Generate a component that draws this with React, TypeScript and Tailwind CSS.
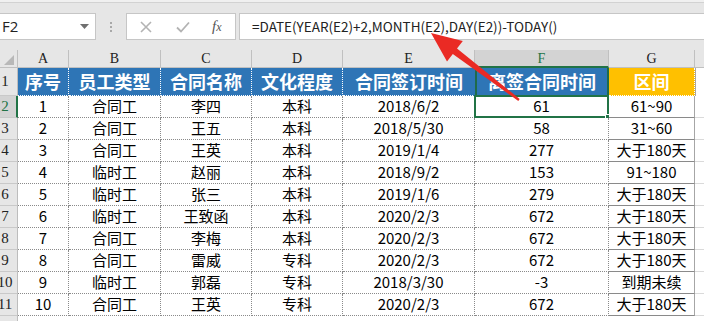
import React from 'react';

type Row = [string, string, string, string, string, string, string];

const rows: Row[] = [
  ['1', '合同工', '李四', '本科', '2018/6/2', '61', '61~90'],
  ['2', '合同工', '王五', '本科', '2018/5/30', '58', '31~60'],
  ['3', '合同工', '王英', '本科', '2019/1/4', '277', '大于180天'],
  ['4', '临时工', '赵丽', '本科', '2018/9/2', '153', '91~180'],
  ['5', '临时工', '张三', '本科', '2019/1/6', '279', '大于180天'],
  ['6', '临时工', '王致函', '本科', '2020/2/3', '672', '大于180天'],
  ['7', '合同工', '李梅', '本科', '2020/2/3', '672', '大于180天'],
  ['8', '合同工', '雷威', '专科', '2020/2/3', '672', '大于180天'],
  ['9', '临时工', '郭磊', '专科', '2018/3/30', '-3', '到期未续'],
  ['10', '合同工', '王英', '专科', '2020/2/3', '672', '大于180天'],
];

const heads = ['序号', '员工类型', '合同名称', '文化程度', '合同签订时间', '离签合同时间', '区间'];
const letters = ['A', 'B', 'C', 'D', 'E', 'F', 'G'];
const widths = ['w-[51px]', 'w-[92px]', 'w-[91px]', 'w-[91px]', 'w-[132px]', 'w-[134px]', 'w-[86px]'];

const cjk = { fontFamily: '"Noto Sans CJK SC", "Noto Sans", sans-serif' };
const serif = { fontFamily: '"Liberation Serif", "DejaVu Serif", serif' };

const RowHead: React.FC<{ n: number; active?: boolean; h: string }> = ({ n, active, h }) => (
  <div
    className={`w-[18px] ${h} shrink-0 overflow-hidden flex items-center border-b border-[#c9c9c9] ${
      active ? 'bg-[#d3d3d3] text-[#217346] border-r-2 border-r-[#217346]' : 'bg-[#e6e6e6] text-[#222] border-r border-r-[#bdbdbd]'
    }`}
  >
    <div className="w-[24px] -ml-[7px] shrink-0 text-center text-[15px] leading-none" style={serif}>
      {n}
    </div>
  </div>
);

export default function App() {
  return (
    <div className="relative w-[704px] h-[321px] overflow-hidden bg-[#e6e6e6] select-none">
      {/* top strip */}
      <div className="h-[3px] bg-[#f0f0f0] border-b border-[#d2d2d2]" />

      {/* formula row */}
      <div className="mt-[10px] h-[27px] flex items-stretch">
        <div className="w-[96px] bg-white border border-l-0 border-[#c6c6c6] flex items-center justify-between pl-[2px] pr-[6px]">
          <span className="text-[15px] text-[#222]" style={{ fontFamily: '"Open Sans", "Noto Sans", sans-serif' }}>
            F2
          </span>
          <svg width="9" height="6" viewBox="0 0 9 6">
            <path d="M0 0h9L4.5 5z" fill="#6f6f6f" />
          </svg>
        </div>
        <div className="w-[30px] flex items-center justify-center">
          <div className="flex flex-col gap-[2px]">
            <span className="w-[2px] h-[2px] bg-[#a8a8a8]" />
            <span className="w-[2px] h-[2px] bg-[#a8a8a8]" />
            <span className="w-[2px] h-[2px] bg-[#a8a8a8]" />
          </div>
        </div>
        <div className="w-[110px] bg-white border border-[#c6c6c6] flex items-center">
          <svg className="ml-[13px]" width="12" height="12" viewBox="0 0 12 12">
            <path d="M1 1l10 10M11 1L1 11" stroke="#b3b3b3" strokeWidth="1.6" />
          </svg>
          <svg className="ml-[24px]" width="14" height="12" viewBox="0 0 14 12">
            <path d="M1 6.5l4 4L13 1.5" stroke="#b3b3b3" strokeWidth="1.8" fill="none" />
          </svg>
          <span className="ml-[22px] text-[15px] italic text-[#555] leading-none" style={serif}>
            f<span className="text-[12px]">x</span>
          </span>
        </div>
        <div className="ml-[3px] flex-1 bg-white border border-r-0 border-[#c6c6c6] flex items-center pl-[12px]">
          <span className="text-[13.5px] text-[#222] whitespace-nowrap" style={cjk}>
            =DATE(YEAR(E2)+2,MONTH(E2),DAY(E2))-TODAY()
          </span>
        </div>
      </div>

      {/* column letters */}
      <div className="mt-[10px] h-[18px] flex">
        <div className="w-[18px] shrink-0 border-r border-b border-[#c0c0c0] flex items-end justify-end pr-[3px] pb-[2px]">
          <svg width="10" height="10" viewBox="0 0 10 10">
            <path d="M10 0V10H0z" fill="#b8b8b8" />
          </svg>
        </div>
        {letters.map((l, i) => (
          <div
            key={l}
            className={`${widths[i]} shrink-0 flex items-center justify-center text-[14px] border-r border-[#c0c0c0] ${
              l === 'F' ? 'bg-[#d3d3d3] text-[#217346] border-b-2 border-b-[#217346]' : 'text-[#222] border-b border-b-[#c0c0c0]'
            }`}
            style={serif}
          >
            {l}
          </div>
        ))}
        <div className="flex-1 border-b border-[#c0c0c0]" />
      </div>

      {/* header row */}
      <div className="h-[28px] flex">
        <RowHead n={1} h="h-[28px]" />
        {heads.map((t, i) => (
          <div
            key={t}
            className={`${widths[i]} shrink-0 flex items-center justify-center text-white font-bold text-[18px] border-b border-dotted border-b-white ${
              i === 6 ? 'bg-[#ffc000]' : 'bg-[#2e75b6]'
            } ${i === 5 ? 'border-x-2 border-x-[#1f6b4a] border-solid' : 'border-r border-r-white border-dotted'} ${i === 4 ? 'border-r-0' : ''}`}
            style={cjk}
          >
            {t}
          </div>
        ))}
        <div className="flex-1 bg-white border-l border-[#a6a6a6]" />
      </div>

      {/* data */}
      {rows.map((r, ri) => (
        <div key={ri} className="h-[22px] flex">
          <RowHead n={ri + 2} active={ri === 0} h="h-[22px]" />
          {r.map((c, ci) => (
            <div
              key={ci}
              className={`relative ${widths[ci]} shrink-0 bg-white flex items-center justify-center text-[15px] text-black border-b border-dotted border-[#8a8a8a] ${
                ci === 6 ? 'border-r border-r-[#a6a6a6] border-solid' : 'border-r'
              }`}
              style={cjk}
            >
              {c}
              {ri === 0 && ci === 5 && (
                <div className="absolute -left-[1px] -top-[1px] -right-[1px] -bottom-[1px] border-2 border-[#217346]">
                  <div className="absolute -right-[4px] -bottom-[4px] w-[6px] h-[6px] bg-[#217346] border border-white" />
                </div>
              )}
            </div>
          ))}
          <div className="flex-1 bg-white border-b border-[#dadada]" />
        </div>
      ))}
      <div className="flex h-[22px]">
        <RowHead n={12} h="h-[22px]" />
        <div className="flex-1 bg-white" />
      </div>

      {/* red arrow */}
      <svg className="absolute left-0 top-0 pointer-events-none" width="704" height="321" viewBox="0 0 704 321">
        <polygon
          points="431,33 462.8,40.9 457,48.4 519.7,99 518.3,101 452.8,54 447,61.5"
          fill="#ea2a24"
        />
      </svg>
    </div>
  );
}
